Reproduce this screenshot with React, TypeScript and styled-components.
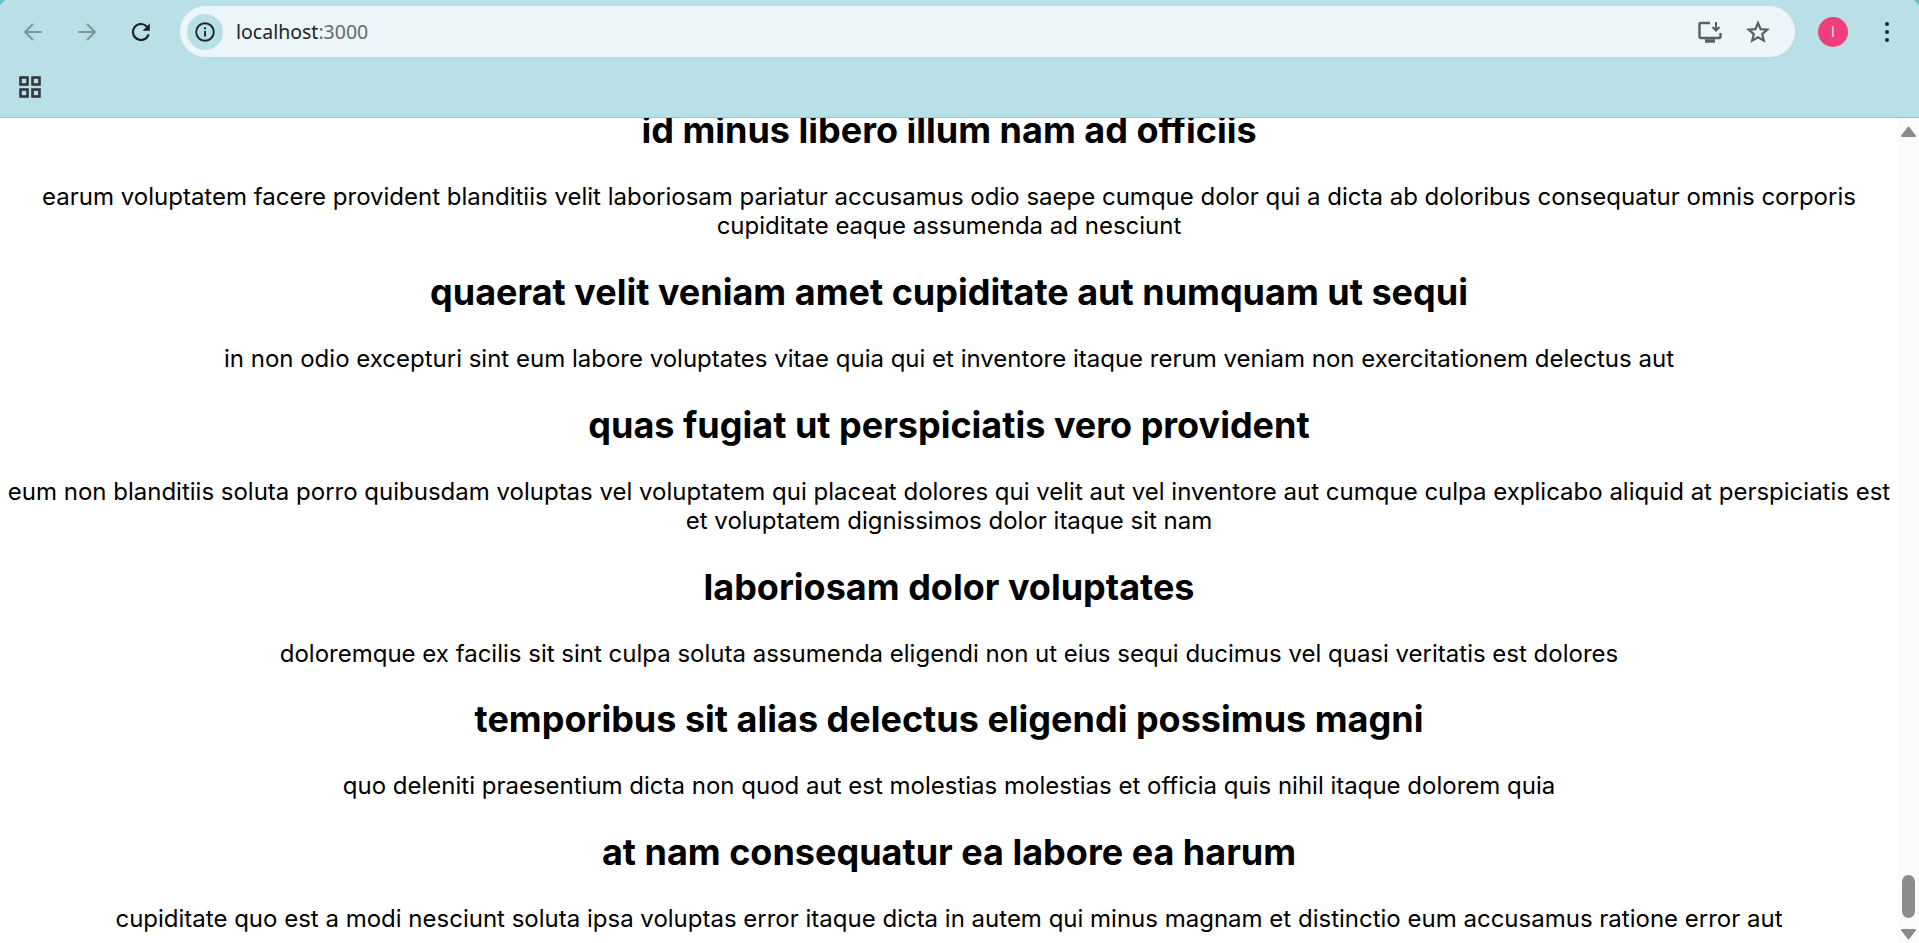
import React from "react";
import styled, { createGlobalStyle } from "styled-components";

const GlobalStyle = createGlobalStyle`
  html, body {
    margin: 0;
    padding: 0;
    height: 100%;
    overflow: hidden;
    background: #fff;
  }
  #root {
    height: 100%;
  }
`;

const Page = styled.div`
  height: 943px;
  display: flex;
  flex-direction: column;
  font-family: Inter, "Liberation Sans", sans-serif;
`;

const BrowserBar = styled.header`
  height: 118px;
  flex: none;
  box-sizing: border-box;
  background:
    linear-gradient(135deg, #63bfcb 3px, transparent 4px),
    linear-gradient(225deg, #63bfcb 3px, transparent 4px),
    #b8e0e6;
  border-bottom: 1px solid #94c4cc;
  display: flex;
  flex-direction: column;
`;

const NavRow = styled.div`
  height: 51px;
  margin-top: 6px;
  display: flex;
  align-items: center;
  padding-left: 14px;
`;

const NavButton = styled.button<{ $dim?: boolean }>`
  width: 38px;
  height: 38px;
  margin-right: 16px;
  padding: 0;
  border: 0;
  background: none;
  display: flex;
  align-items: center;
  justify-content: center;
  color: ${(p) => (p.$dim ? "#7d9599" : "#1f2224")};
`;

const Omnibox = styled.div`
  width: 1615px;
  height: 51px;
  margin-left: 4px;
  box-sizing: border-box;
  border-radius: 26px;
  background: #ecf6f8;
  display: flex;
  align-items: center;
  padding-left: 7px;
  padding-right: 24px;
`;

const SiteInfo = styled.div`
  width: 36px;
  height: 36px;
  border-radius: 50%;
  background: #b8e0e6;
  display: flex;
  align-items: center;
  justify-content: center;
  color: #1f2224;
`;

const Address = styled.div`
  margin-left: 13px;
  font-family: "Noto Sans", "Open Sans", sans-serif;
  font-size: 19.5px;
  color: #1f2224;
  flex: 1;
`;

const Port = styled.span`
  color: #5f6b6e;
`;

const OmniIcon = styled.div`
  width: 26px;
  height: 26px;
  margin-left: 22px;
  display: flex;
  align-items: center;
  justify-content: center;
  color: #5b5f61;
`;

const Avatar = styled.div`
  width: 30px;
  height: 30px;
  margin-left: 23px;
  border-radius: 50%;
  background: #f03e7a;
  color: #fde3ec;
  font-size: 14px;
  display: flex;
  align-items: center;
  justify-content: center;
`;

const MenuDots = styled.div`
  width: 24px;
  height: 24px;
  margin-left: 27px;
  color: #1f2224;
  display: flex;
  align-items: center;
  justify-content: center;
`;

const BookmarkRow = styled.div`
  flex: 1;
  display: flex;
  align-items: center;
  padding-left: 19px;
  color: #33383a;
`;

const Body = styled.div`
  flex: 1;
  min-height: 0;
  display: flex;
`;

const Content = styled.main`
  flex: 1;
  min-width: 0;
  overflow: hidden;
  text-align: center;
  color: #000;
`;

const Heading = styled.h2`
  margin: 29.88px 0;
  font-size: 36px;
  font-weight: 700;

  &:first-child {
    margin-top: -9.6px;
  }
`;

const Paragraph = styled.p`
  margin: 24px 0;
  font-size: 24px;
`;

const ScrollTrack = styled.aside`
  width: 21px;
  flex: none;
  background: #fbfbfb;
  display: flex;
  flex-direction: column;
  align-items: center;
  box-sizing: border-box;
  padding: 8px 0 3px;
  color: #8a8a8a;
`;

const Thumb = styled.div`
  width: 13px;
  height: 43px;
  margin-top: auto;
  margin-bottom: 11px;
  border-radius: 6.5px;
  background: #8c8c8c;
`;

const posts = [
  [
    "id minus libero illum nam ad officiis",
    "earum voluptatem facere provident blanditiis velit laboriosam pariatur accusamus odio saepe cumque dolor qui a dicta ab doloribus consequatur omnis corporis cupiditate eaque assumenda ad nesciunt",
  ],
  [
    "quaerat velit veniam amet cupiditate aut numquam ut sequi",
    "in non odio excepturi sint eum labore voluptates vitae quia qui et inventore itaque rerum veniam non exercitationem delectus aut",
  ],
  [
    "quas fugiat ut perspiciatis vero provident",
    "eum non blanditiis soluta porro quibusdam voluptas vel voluptatem qui placeat dolores qui velit aut vel inventore aut cumque culpa explicabo aliquid at perspiciatis est et voluptatem dignissimos dolor itaque sit nam",
  ],
  [
    "laboriosam dolor voluptates",
    "doloremque ex facilis sit sint culpa soluta assumenda eligendi non ut eius sequi ducimus vel quasi veritatis est dolores",
  ],
  [
    "temporibus sit alias delectus eligendi possimus magni",
    "quo deleniti praesentium dicta non quod aut est molestias molestias et officia quis nihil itaque dolorem quia",
  ],
  [
    "at nam consequatur ea labore ea harum",
    "cupiditate quo est a modi nesciunt soluta ipsa voluptas error itaque dicta in autem qui minus magnam et distinctio eum accusamus ratione error aut",
  ],
];

const App = () => {
  return (
    <Page>
      <GlobalStyle />
      <BrowserBar>
        <NavRow>
          <NavButton $dim>
            <svg width="20" height="20" viewBox="0 0 20 20" fill="none" stroke="currentColor" strokeWidth="2">
              <path d="M19 10H2M10 2l-8 8 8 8" />
            </svg>
          </NavButton>
          <NavButton $dim>
            <svg width="20" height="20" viewBox="0 0 20 20" fill="none" stroke="currentColor" strokeWidth="2">
              <path d="M1 10h17M10 2l8 8-8 8" />
            </svg>
          </NavButton>
          <NavButton>
            <svg width="20" height="20" viewBox="0 0 20 20" fill="none" stroke="currentColor" strokeWidth="2.2">
              <path d="M17.6 12.4a8 8 0 1 1-1.8-7.9L18 7" />
              <path d="M18.8 1.5v7.3h-7.3z" fill="currentColor" stroke="none" />
            </svg>
          </NavButton>
          <Omnibox>
            <SiteInfo>
              <svg width="20" height="20" viewBox="0 0 20 20" fill="none" stroke="currentColor" strokeWidth="1.9">
                <circle cx="10" cy="10" r="8.8" />
                <path d="M10 9v5.5M10 5.2v2" />
              </svg>
            </SiteInfo>
            <Address>
              localhost<Port>:3000</Port>
            </Address>
            <OmniIcon>
              <svg width="24" height="22" viewBox="0 0 24 22" fill="none" stroke="currentColor" strokeWidth="2.4">
                <path d="M12 2H3a1.5 1.5 0 0 0-1.5 1.5v12A1.5 1.5 0 0 0 3 17h18a1.5 1.5 0 0 0 1.5-1.5V12" />
                <path d="M7 20h10" strokeWidth="3.5" />
                <path d="M18 1v8M14.5 6l3.5 3.5L21.5 6" strokeWidth="2" />
              </svg>
            </OmniIcon>
            <OmniIcon>
              <svg width="24" height="24" viewBox="0 0 24 24" fill="none" stroke="currentColor" strokeWidth="2.2" strokeLinejoin="miter">
                <path d="M12 3l2.6 6.2 6.7.5-5.1 4.4 1.6 6.5L12 17.2l-5.8 3.4 1.6-6.5-5.1-4.4 6.7-.5z" />
              </svg>
            </OmniIcon>
          </Omnibox>
          <Avatar>I</Avatar>
          <MenuDots>
            <svg width="6" height="22" viewBox="0 0 6 22" fill="currentColor">
              <circle cx="3" cy="3" r="2" />
              <circle cx="3" cy="11" r="2" />
              <circle cx="3" cy="19" r="2" />
            </svg>
          </MenuDots>
        </NavRow>
        <BookmarkRow>
          <svg width="22" height="22" viewBox="0 0 22 22" fill="none" stroke="currentColor" strokeWidth="2.6">
            <rect x="1.5" y="1.5" width="7" height="7" />
            <rect x="13.5" y="1.5" width="7" height="7" />
            <rect x="1.5" y="13.5" width="7" height="7" />
            <rect x="13.5" y="13.5" width="7" height="7" />
          </svg>
        </BookmarkRow>
      </BrowserBar>
      <Body>
        <Content>
          {posts.map(([title, text]) => (
            <React.Fragment key={title}>
              <Heading>{title}</Heading>
              <Paragraph>{text}</Paragraph>
            </React.Fragment>
          ))}
        </Content>
        <ScrollTrack>
          <svg width="15" height="11" viewBox="0 0 15 11" fill="currentColor" stroke="currentColor" strokeWidth="2" strokeLinejoin="round">
            <path d="M7.5 1.5L14 10H1z" />
          </svg>
          <Thumb />
          <svg width="15" height="11" viewBox="0 0 15 11" fill="currentColor" stroke="currentColor" strokeWidth="2" strokeLinejoin="round">
            <path d="M7.5 9.5L14 1H1z" />
          </svg>
        </ScrollTrack>
      </Body>
    </Page>
  );
};

export default App;
